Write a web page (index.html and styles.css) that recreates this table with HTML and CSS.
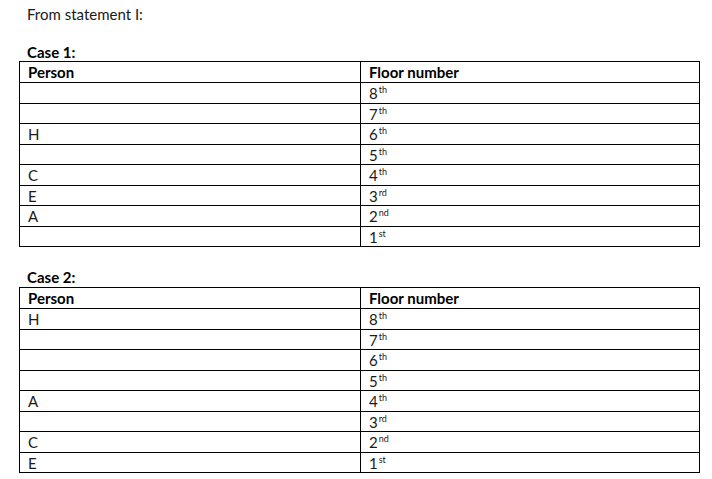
FILE: index.html
```html
<!DOCTYPE html>
<html>
<head>
<meta charset="utf-8">
<link rel="stylesheet" href="styles.css">
</head>
<body>
<p class="intro">From statement I:</p>

<p class="case case-first">Case 1:</p>
<table class="floors">
  <tr class="head"><td class="person">Person</td><td>Floor number</td></tr>
  <tr class="r21"><td></td><td>8<sup>th</sup></td></tr>
  <tr class="r20"><td></td><td>7<sup>th</sup></td></tr>
  <tr class="r21"><td>H</td><td>6<sup>th</sup></td></tr>
  <tr class="r20"><td></td><td>5<sup>th</sup></td></tr>
  <tr class="r21"><td>C</td><td>4<sup>th</sup></td></tr>
  <tr class="r20"><td>E</td><td>3<sup>rd</sup></td></tr>
  <tr class="r21"><td>A</td><td>2<sup>nd</sup></td></tr>
  <tr class="r20"><td></td><td>1<sup>st</sup></td></tr>
</table>

<p class="case case-second">Case 2:</p>
<table class="floors">
  <tr class="head"><td class="person">Person</td><td>Floor number</td></tr>
  <tr class="r21"><td>H</td><td>8<sup>th</sup></td></tr>
  <tr class="r20"><td></td><td>7<sup>th</sup></td></tr>
  <tr class="r21"><td></td><td>6<sup>th</sup></td></tr>
  <tr class="r20"><td></td><td>5<sup>th</sup></td></tr>
  <tr class="r21"><td>A</td><td>4<sup>th</sup></td></tr>
  <tr class="r20"><td></td><td>3<sup>rd</sup></td></tr>
  <tr class="r21"><td>C</td><td>2<sup>nd</sup></td></tr>
  <tr class="r20"><td>E</td><td>1<sup>st</sup></td></tr>
</table>
</body>
</html>
```

FILE: styles.css
```css
html, body {
  margin: 0;
  padding: 0;
  background: #ffffff;
}

body {
  font-family: "Lato", "Open Sans", sans-serif;
  font-size: 15px;
  color: #1a1a1a;
  padding: 4px 0 0 19px;
}

.intro {
  margin: 0 0 0 8px;
  height: 20px;
  line-height: 20px;
}

.case {
  margin: 0 0 0 8px;
  font-weight: bold;
  line-height: 18px;
  color: #000;
}

.case-first {
  margin-top: 19px;
  height: 18px;
}

.case-second {
  margin-top: 21px;
  height: 19px;
}

.floors {
  border-collapse: collapse;
  width: 681px;
  table-layout: fixed;
}

.floors td {
  border: 1px solid #000;
  padding: 0 0 0 8px;
  vertical-align: middle;
  line-height: 16px;
}

.floors td:first-child {
  width: 332px;
}

.floors .head td {
  font-weight: bold;
  color: #000;
}

.head { height: 21px; }
.r21 { height: 21px; }
.r20 { height: 20px; }

sup {
  font-size: 9px;
  line-height: 0;
  vertical-align: 6px;
  margin-left: 1px;
}
```
